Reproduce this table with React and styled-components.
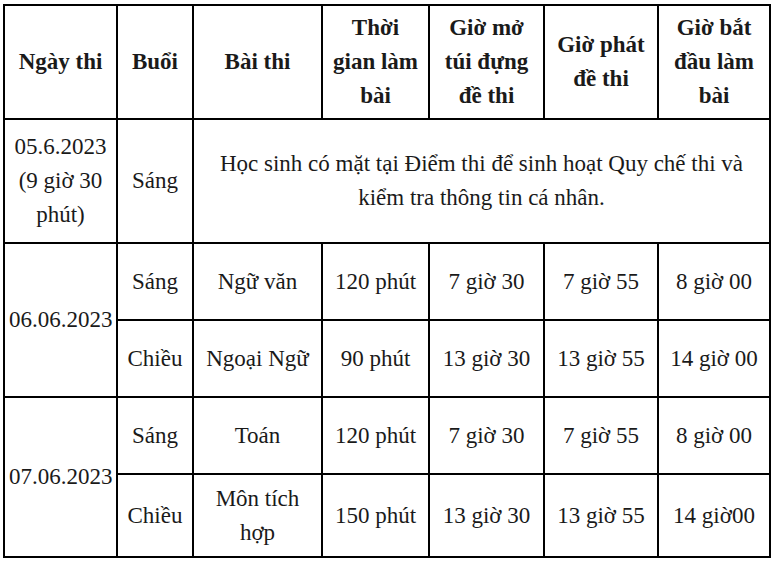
import React from "react";
import styled, { createGlobalStyle } from "styled-components";

const GlobalStyle = createGlobalStyle`
  html, body {
    margin: 0;
    padding: 0;
    background: #ffffff;
  }
  body {
    font-family: "Liberation Serif", "Times New Roman", serif;
    color: #1a1a1a;
  }
`;

const Page = styled.div`
  padding: 4px 0 0 3px;
`;

const Table = styled.table`
  border-collapse: collapse;
  table-layout: fixed;
  width: 768px;
  font-size: 23px;
  line-height: 34px;
`;

const Row = styled.tr`
  height: ${(p) => p.$h}px;
`;

const HeadCell = styled.th`
  border: 2px solid #000;
  font-weight: bold;
  text-align: center;
  vertical-align: middle;
  padding: 0 4px;
`;

const Cell = styled.td`
  border: 2px solid #000;
  text-align: center;
  vertical-align: middle;
  padding: 0 4px;
`;

const widths = [113, 76, 129, 107, 115, 114, 112];

const heads = [
  "Ngày thi",
  "Buổi",
  "Bài thi",
  ["Thời", "gian làm", "bài"],
  ["Giờ mở", "túi đựng", "đề thi"],
  ["Giờ phát", "đề thi"],
  ["Giờ bắt", "đầu làm", "bài"],
];

const Lines = ({ value }) =>
  Array.isArray(value)
    ? value.map((l, i) => (
        <React.Fragment key={i}>
          {i > 0 && <br />}
          {l}
        </React.Fragment>
      ))
    : value;

const days = [
  {
    date: "06.06.2023",
    sessions: [
      ["Sáng", "Ngữ văn", "120 phút", "7 giờ 30", "7 giờ 55", "8 giờ 00"],
      ["Chiều", "Ngoại Ngữ", "90 phút", "13 giờ 30", "13 giờ 55", "14 giờ 00"],
    ],
    heights: [77, 77],
  },
  {
    date: "07.06.2023",
    sessions: [
      ["Sáng", "Toán", "120 phút", "7 giờ 30", "7 giờ 55", "8 giờ 00"],
      ["Chiều", ["Môn tích", "hợp"], "150 phút", "13 giờ 30", "13 giờ 55", "14 giờ00"],
    ],
    heights: [77, 83],
  },
];

export default function App() {
  return (
    <Page>
      <GlobalStyle />
      <Table>
        <colgroup>
          {widths.map((w, i) => (
            <col key={i} style={{ width: w }} />
          ))}
        </colgroup>
        <thead>
          <Row $h={114}>
            {heads.map((h, i) => (
              <HeadCell key={i}>
                <Lines value={h} />
              </HeadCell>
            ))}
          </Row>
        </thead>
        <tbody>
          <Row $h={124}>
            <Cell>
              05.6.2023
              <br />
              (9 giờ 30
              <br />
              phút)
            </Cell>
            <Cell>Sáng</Cell>
            <Cell colSpan={5}>
              Học sinh có mặt tại Điểm thi để sinh hoạt Quy chế thi và
              <br />
              kiểm tra thông tin cá nhân.
            </Cell>
          </Row>
          {days.map((d) =>
            d.sessions.map((s, si) => (
              <Row key={d.date + si} $h={d.heights[si]}>
                {si === 0 && <Cell rowSpan={2}>{d.date}</Cell>}
                {s.map((v, vi) => (
                  <Cell key={vi}>
                    <Lines value={v} />
                  </Cell>
                ))}
              </Row>
            ))
          )}
        </tbody>
      </Table>
    </Page>
  );
}
